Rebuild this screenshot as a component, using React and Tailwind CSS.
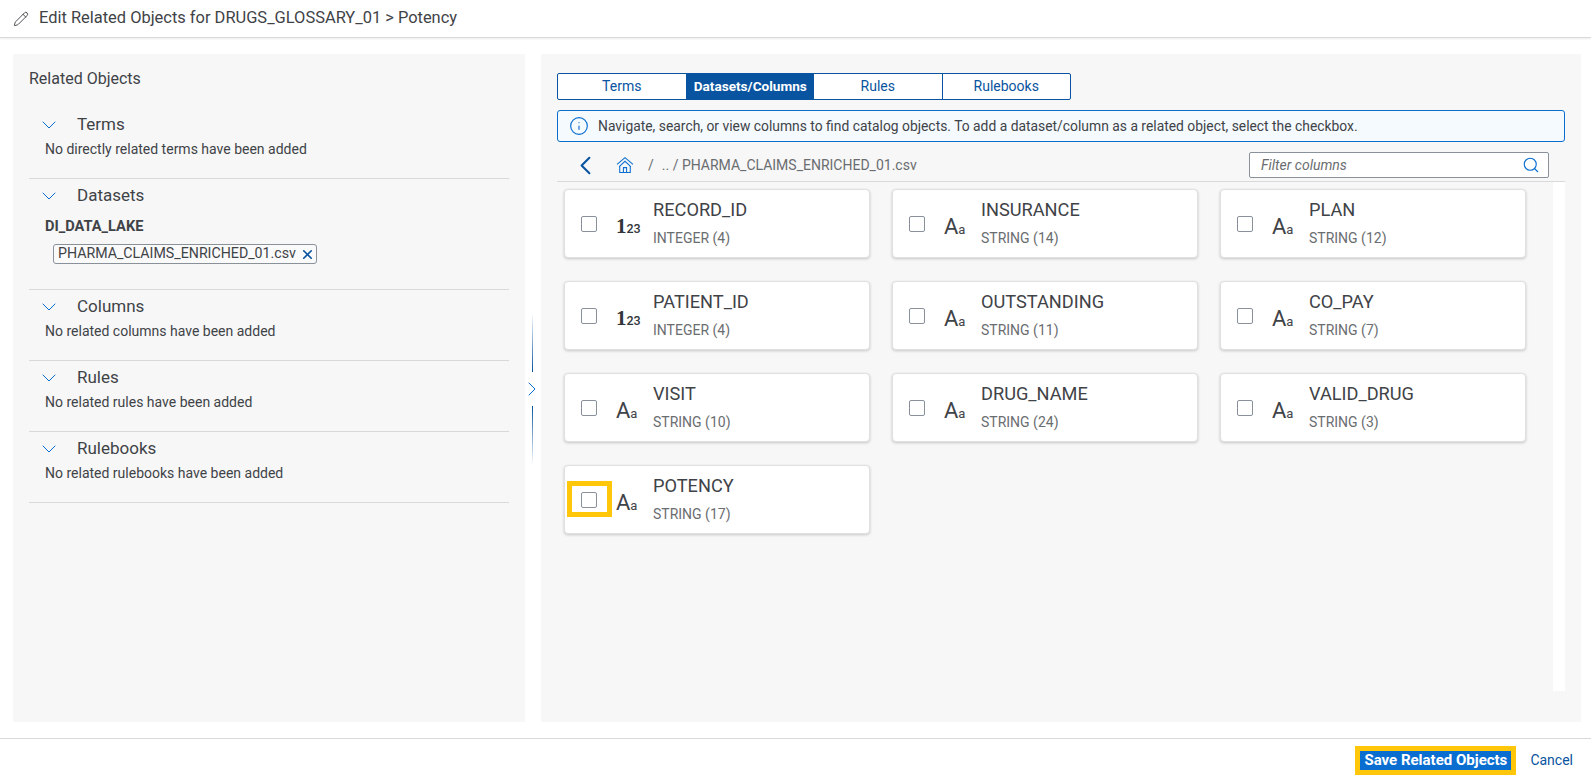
import { ChevronDown, ChevronLeft, ChevronRight, Info, Pencil, Search, X } from "lucide-react"

const columns = [
  { name: "RECORD_ID", type: "INTEGER (4)", numeric: true },
  { name: "INSURANCE", type: "STRING (14)" },
  { name: "PLAN", type: "STRING (12)" },
  { name: "PATIENT_ID", type: "INTEGER (4)", numeric: true },
  { name: "OUTSTANDING", type: "STRING (11)" },
  { name: "CO_PAY", type: "STRING (7)" },
  { name: "VISIT", type: "STRING (10)" },
  { name: "DRUG_NAME", type: "STRING (24)" },
  { name: "VALID_DRUG", type: "STRING (3)" },
  { name: "POTENCY", type: "STRING (17)", highlight: true },
]

const tabs = ["Terms", "Datasets/Columns", "Rules", "Rulebooks"]

function SectionHead({ title }) {
  return (
    <div className="flex items-center h-[32px] pt-[2px]">
      <ChevronDown className="ml-[8px] w-[24px] h-[24px] text-[#0a6ed1]" strokeWidth={1} />
      <span className="ml-[16px] text-[17px] text-[#3f4347]">{title}</span>
    </div>
  )
}

function EmptySection({ title, text }) {
  return (
    <div className="h-[71px] border-b border-[#d9d9d9]">
      <SectionHead title={title} />
      <p className="ml-[16px] text-[14px] leading-[18px] text-[#3f4347]">{text}</p>
    </div>
  )
}

function TypeIcon({ numeric }) {
  if (numeric) {
    return (
      <span className="ml-[19px] mt-[6px] w-[37px] shrink-0 text-[#32363a] font-['Liberation_Serif',serif] leading-none">
        <span className="text-[21px] font-bold">1</span>
        <span className="text-[12.5px] font-medium font-['Roboto',sans-serif]">23</span>
      </span>
    )
  }
  return (
    <span className="ml-[19px] mt-[6px] w-[37px] shrink-0 text-[#3f4347] leading-none">
      <span className="text-[22px]">A</span>
      <span className="text-[13px]">a</span>
    </span>
  )
}

function ColumnCard({ name, type, numeric, highlight }) {
  return (
    <div className="relative h-[69px] bg-white rounded-[4px] border border-[#e0e0e0] shadow-[0_1px_3px_rgba(0,0,0,0.2)] flex items-center">
      <span className="ml-[16px] w-[16px] h-[16px] shrink-0 bg-white border border-[#89919a] rounded-[2px]" />
      <TypeIcon numeric={numeric} />
      <div className="-mt-[2px] flex flex-col">
        <span className="text-[18.2px] leading-[22px] text-[#3f4347]">{name}</span>
        <span className="mt-[8px] text-[14px] leading-[18px] text-[#6a6d70]">{type}</span>
      </div>
      {highlight && <span className="absolute left-[2px] top-[15px] w-[45px] h-[36px] border-[5px] border-[#ffc60a]" />}
    </div>
  )
}

export default function App() {
  return (
    <div className="h-[776px] w-[1591px] overflow-hidden bg-white flex flex-col font-['Roboto',sans-serif]">
      <header className="h-[38px] shrink-0 flex items-center pl-[13px] border-b border-[#d9d9d9] shadow-[0_1px_2px_rgba(0,0,0,0.08)]">
        <Pencil className="w-[16px] h-[16px] text-[#32363a]" strokeWidth={1.3} />
        <h1 className="ml-[10px] text-[16.45px] text-[#3f4347]">Edit Related Objects for DRUGS_GLOSSARY_01 &gt; Potency</h1>
      </header>

      <main className="h-[700px] shrink-0 pt-[16px] pl-[13px] flex">
        <aside className="w-[512px] h-[668px] bg-[#f7f7f7] pl-[16px] pr-[16px] pt-[15px]">
          <h2 className="text-[16px] leading-[20px] text-[#3f4347]">Related Objects</h2>
          <div className="mt-[19px]">
            <EmptySection title="Terms" text="No directly related terms have been added" />
            <div className="h-[111px] border-b border-[#d9d9d9]">
              <SectionHead title="Datasets" />
              <p className="ml-[16px] mt-[6px] text-[14.6px] leading-[18px] font-bold text-[#3f4347]">DI_DATA_LAKE</p>
              <span className="ml-[24px] mt-[9px] inline-flex items-center h-[20px] pl-[4px] pr-[2px] bg-[#fafafa] border border-[#89919a] rounded-[3px] text-[14.2px] text-[#3f4347]">
                PHARMA_CLAIMS_ENRICHED_01.csv
                <X className="ml-[4px] -mr-[1px] w-[15px] h-[15px] text-[#0854a0]" strokeWidth={2.6} />
              </span>
            </div>
            <EmptySection title="Columns" text="No related columns have been added" />
            <EmptySection title="Rules" text="No related rules have been added" />
            <EmptySection title="Rulebooks" text="No related rulebooks have been added" />
          </div>
        </aside>

        <div className="w-[16px] shrink-0 flex flex-col items-center pt-[259px] pr-[2px]">
          <span className="w-px h-[59px] bg-gradient-to-b from-transparent to-[#0854a0]" />
          <ChevronRight className="w-[24px] h-[34px] shrink-0 text-[#0a6ed1]" strokeWidth={1} />
          <span className="w-px h-[59px] bg-gradient-to-b from-[#0854a0] to-transparent" />
        </div>

        <section className="w-[1040px] h-[668px] bg-[#f7f7f7] pl-[16px] pr-[16px] pt-[19px]">
          <div className="flex w-[514px] h-[27px] border border-[#0854a0] rounded-[2px] bg-white">
            {tabs.map((t, i) => (
              <span
                key={t}
                className={
                  i === 1
                    ? "flex-1 flex items-center justify-center bg-[#0854a0] text-white font-bold text-[13.6px]"
                    : "flex-1 flex items-center justify-center text-[#0854a0] text-[14px] border-r border-[#0854a0] last:border-r-0"
                }
              >
                {t}
              </span>
            ))}
          </div>

          <div className="mt-[10px] h-[32px] flex items-center bg-[#f5faff] border border-[#0a6ed1] rounded-[3px] pl-[11px]">
            <Info className="w-[20px] h-[20px] text-[#0a6ed1]" strokeWidth={1.4} />
            <span className="ml-[9px] text-[13.87px] text-[#3f4347]">
              Navigate, search, or view columns to find catalog objects. To add a dataset/column as a related object, select the checkbox.
            </span>
          </div>

          <div className="h-[40px] pt-[7px] flex items-center border-b border-[#d9d9d9] pl-[13px]">
            <ChevronLeft className="w-[31px] h-[31px] text-[#0854a0]" strokeWidth={1.6} />
            <svg className="ml-[15px] w-[18px] h-[18px] text-[#0a6ed1]" viewBox="0 0 17 17" fill="none" stroke="currentColor" strokeWidth="1">
              <path d="M1 8 8.5 1.5 16 8" />
              <path d="M3 10 8.5 5 14 10" />
              <path d="M3.5 9.5V15.5H13.5V9.5" />
              <path d="M7 15.5V11H10V15.5" />
            </svg>
            <span className="ml-[14px] text-[14px] text-[#6a6d70]">/</span>
            <span className="ml-[8px] text-[14px] text-[#6a6d70]">.. / PHARMA_CLAIMS_ENRICHED_01.csv</span>
            <div className="ml-auto mr-[16px] w-[300px] h-[26px] bg-white border border-[#89919a] rounded-[2px] flex items-center justify-between px-[11px]">
              <span className="text-[14px] italic text-[#6a6d70]">Filter columns</span>
              <Search className="w-[18px] h-[18px] text-[#0a6ed1] -mr-[3px]" strokeWidth={1.5} />
            </div>
          </div>

          <div className="flex">
            <div className="w-[996px] h-[509px] pl-[7px] pt-[7px] grid grid-cols-[306px_306px_306px] gap-x-[22px] gap-y-[23px] content-start">
              {columns.map((c) => (
                <ColumnCard key={c.name} {...c} />
              ))}
            </div>
            <div className="w-[12px] h-[509px] bg-white" />
          </div>
        </section>
      </main>

      <footer className="flex-1 pt-[5px] border-t border-[#d9d9d9] flex items-center justify-end pr-[18px]">
        <span className="h-[29px] w-[161px] flex items-center justify-center bg-[#0a6ed1] border-[5px] border-[#ffc60a] text-white font-bold text-[15px] whitespace-nowrap">
          Save Related Objects
        </span>
        <span className="ml-[14px] text-[14px] text-[#0854a0]">Cancel</span>
      </footer>
    </div>
  )
}
